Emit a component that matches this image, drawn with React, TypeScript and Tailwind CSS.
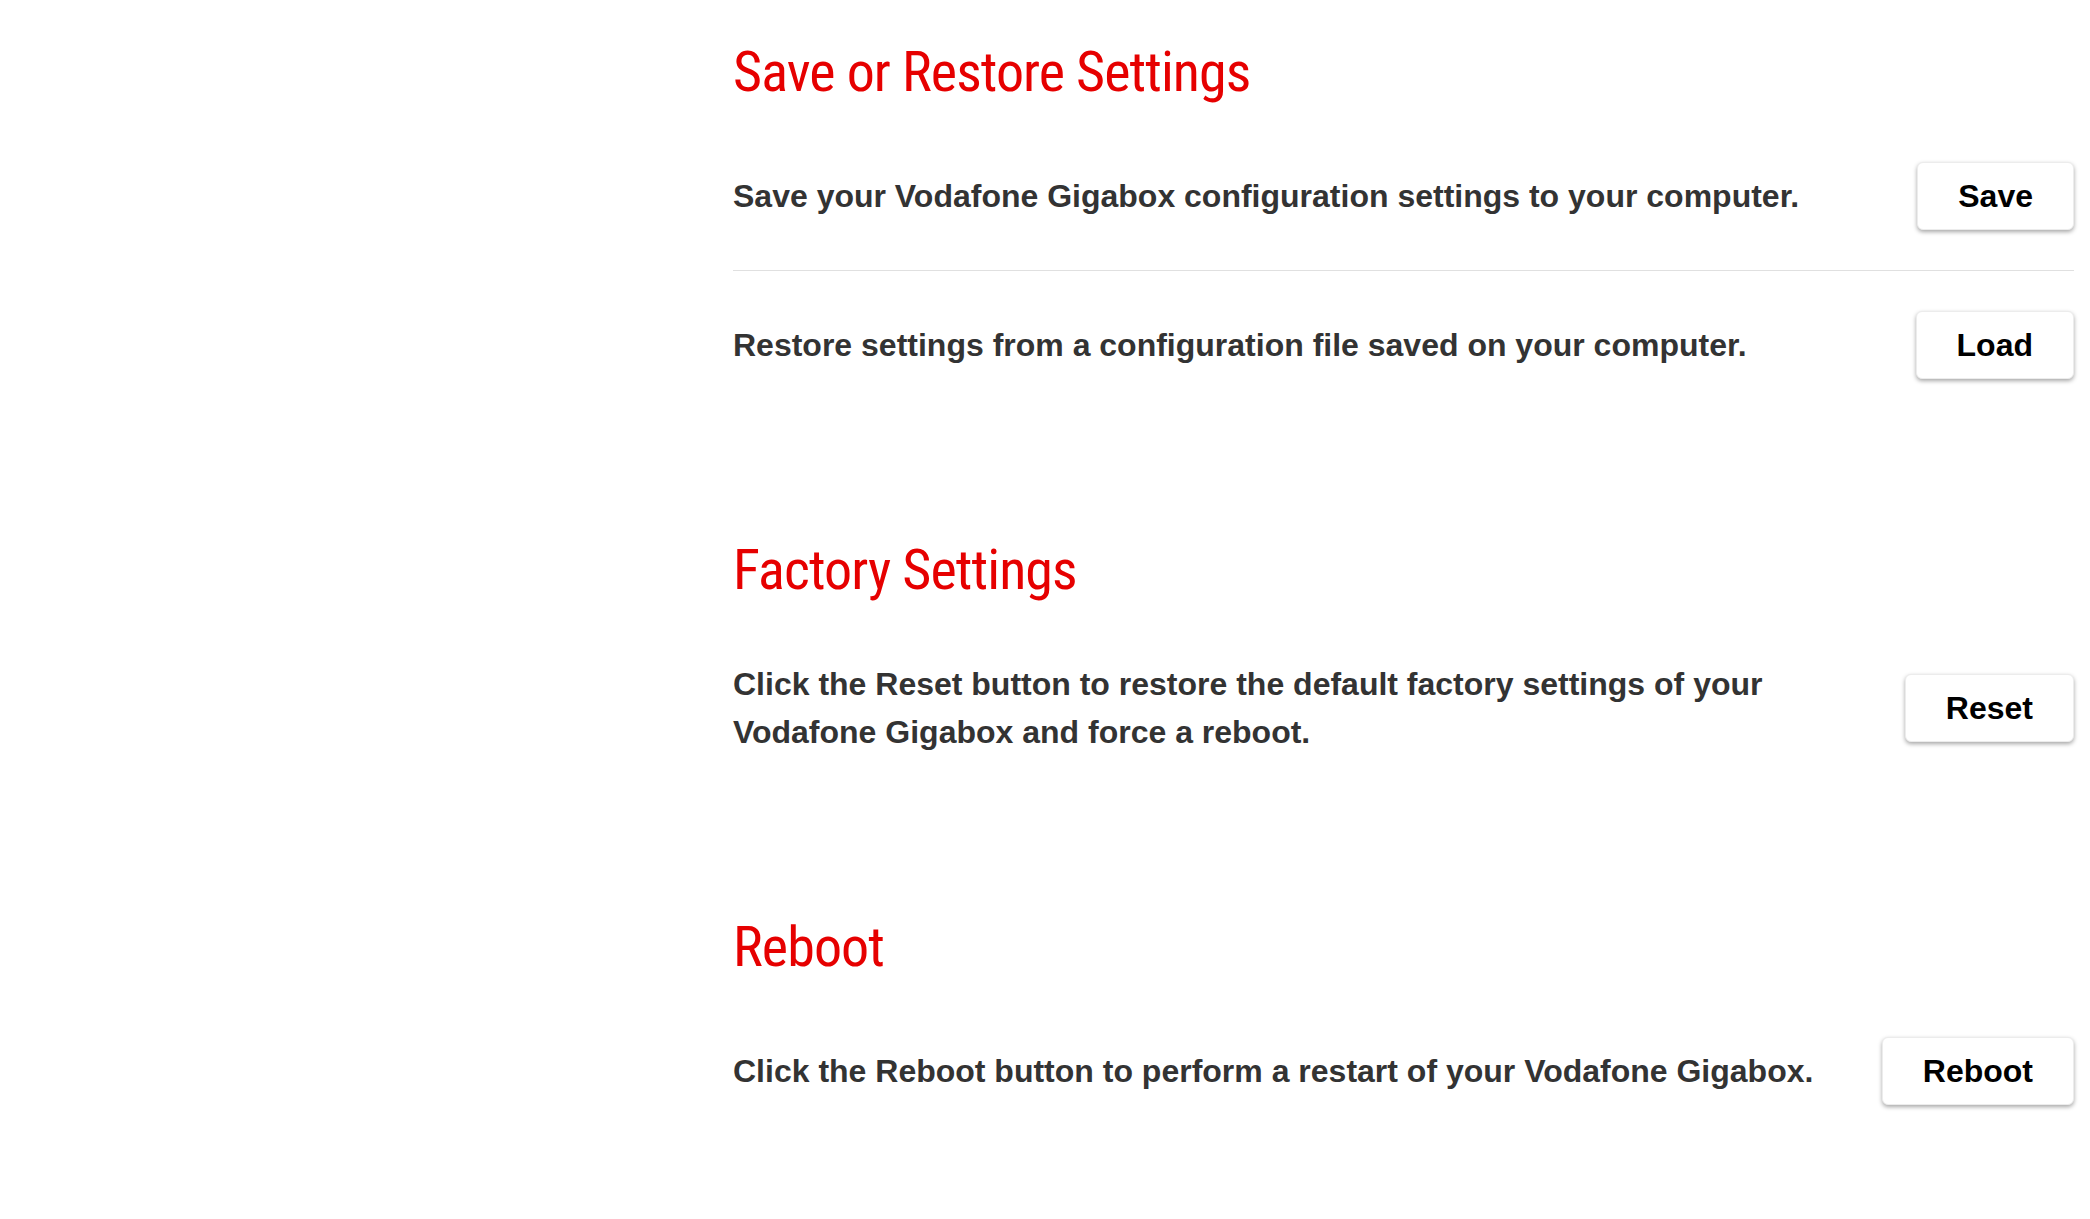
import { FC, ReactNode } from "react";

const headingFont = {
  fontFamily:
    '"Liberation Sans Narrow", "Roboto Condensed", "DejaVu Sans Condensed", "Liberation Sans", sans-serif',
};

const ActionButton: FC<{ label: string }> = ({ label }) => (
  <button className="h-[68px] shrink-0 rounded-[6px] border border-[#ececec] bg-white px-[40px] text-[32px] font-bold text-black shadow-[0_2px_4px_rgba(0,0,0,0.35)]">
    {label}
  </button>
);

const Row: FC<{ text: ReactNode; button: string }> = ({ text, button }) => (
  <div className="flex items-center justify-between gap-[40px] py-[40px]">
    <p className="text-[32px] font-bold leading-[48px] text-[#333333]">
      {text}
    </p>
    <ActionButton label={button} />
  </div>
);

const Section: FC<{ title: string; first?: boolean; children: ReactNode }> = ({
  title,
  first,
  children,
}) => (
  <section className={first ? "" : "mt-[123px]"}>
    <h2
      style={headingFont}
      className="mb-[22px] text-[56px] font-normal leading-[56px] tracking-[-0.9px] text-[#e60000]"
    >
      {title}
    </h2>
    {children}
  </section>
);

export default function App() {
  return (
    <div
      className="flex min-h-[1219px] w-full bg-white"
      style={{ fontFamily: '"Liberation Sans", Arial, sans-serif' }}
    >
      <aside className="w-[733px] shrink-0" />
      <main className="flex-1 pr-[16px] pt-[44px]">
        <Section title="Save or Restore Settings" first>
          <Row
            text="Save your Vodafone Gigabox configuration settings to your computer."
            button="Save"
          />
          <div className="h-px bg-[#e0e0e0]" />
          <Row
            text="Restore settings from a configuration file saved on your computer."
            button="Load"
          />
        </Section>

        <Section title="Factory Settings">
          <Row
            text="Click the Reset button to restore the default factory settings of your Vodafone Gigabox and force a reboot."
            button="Reset"
          />
        </Section>

        <Section title="Reboot">
          <Row
            text="Click the Reboot button to perform a restart of your Vodafone Gigabox."
            button="Reboot"
          />
        </Section>
      </main>
    </div>
  );
}
